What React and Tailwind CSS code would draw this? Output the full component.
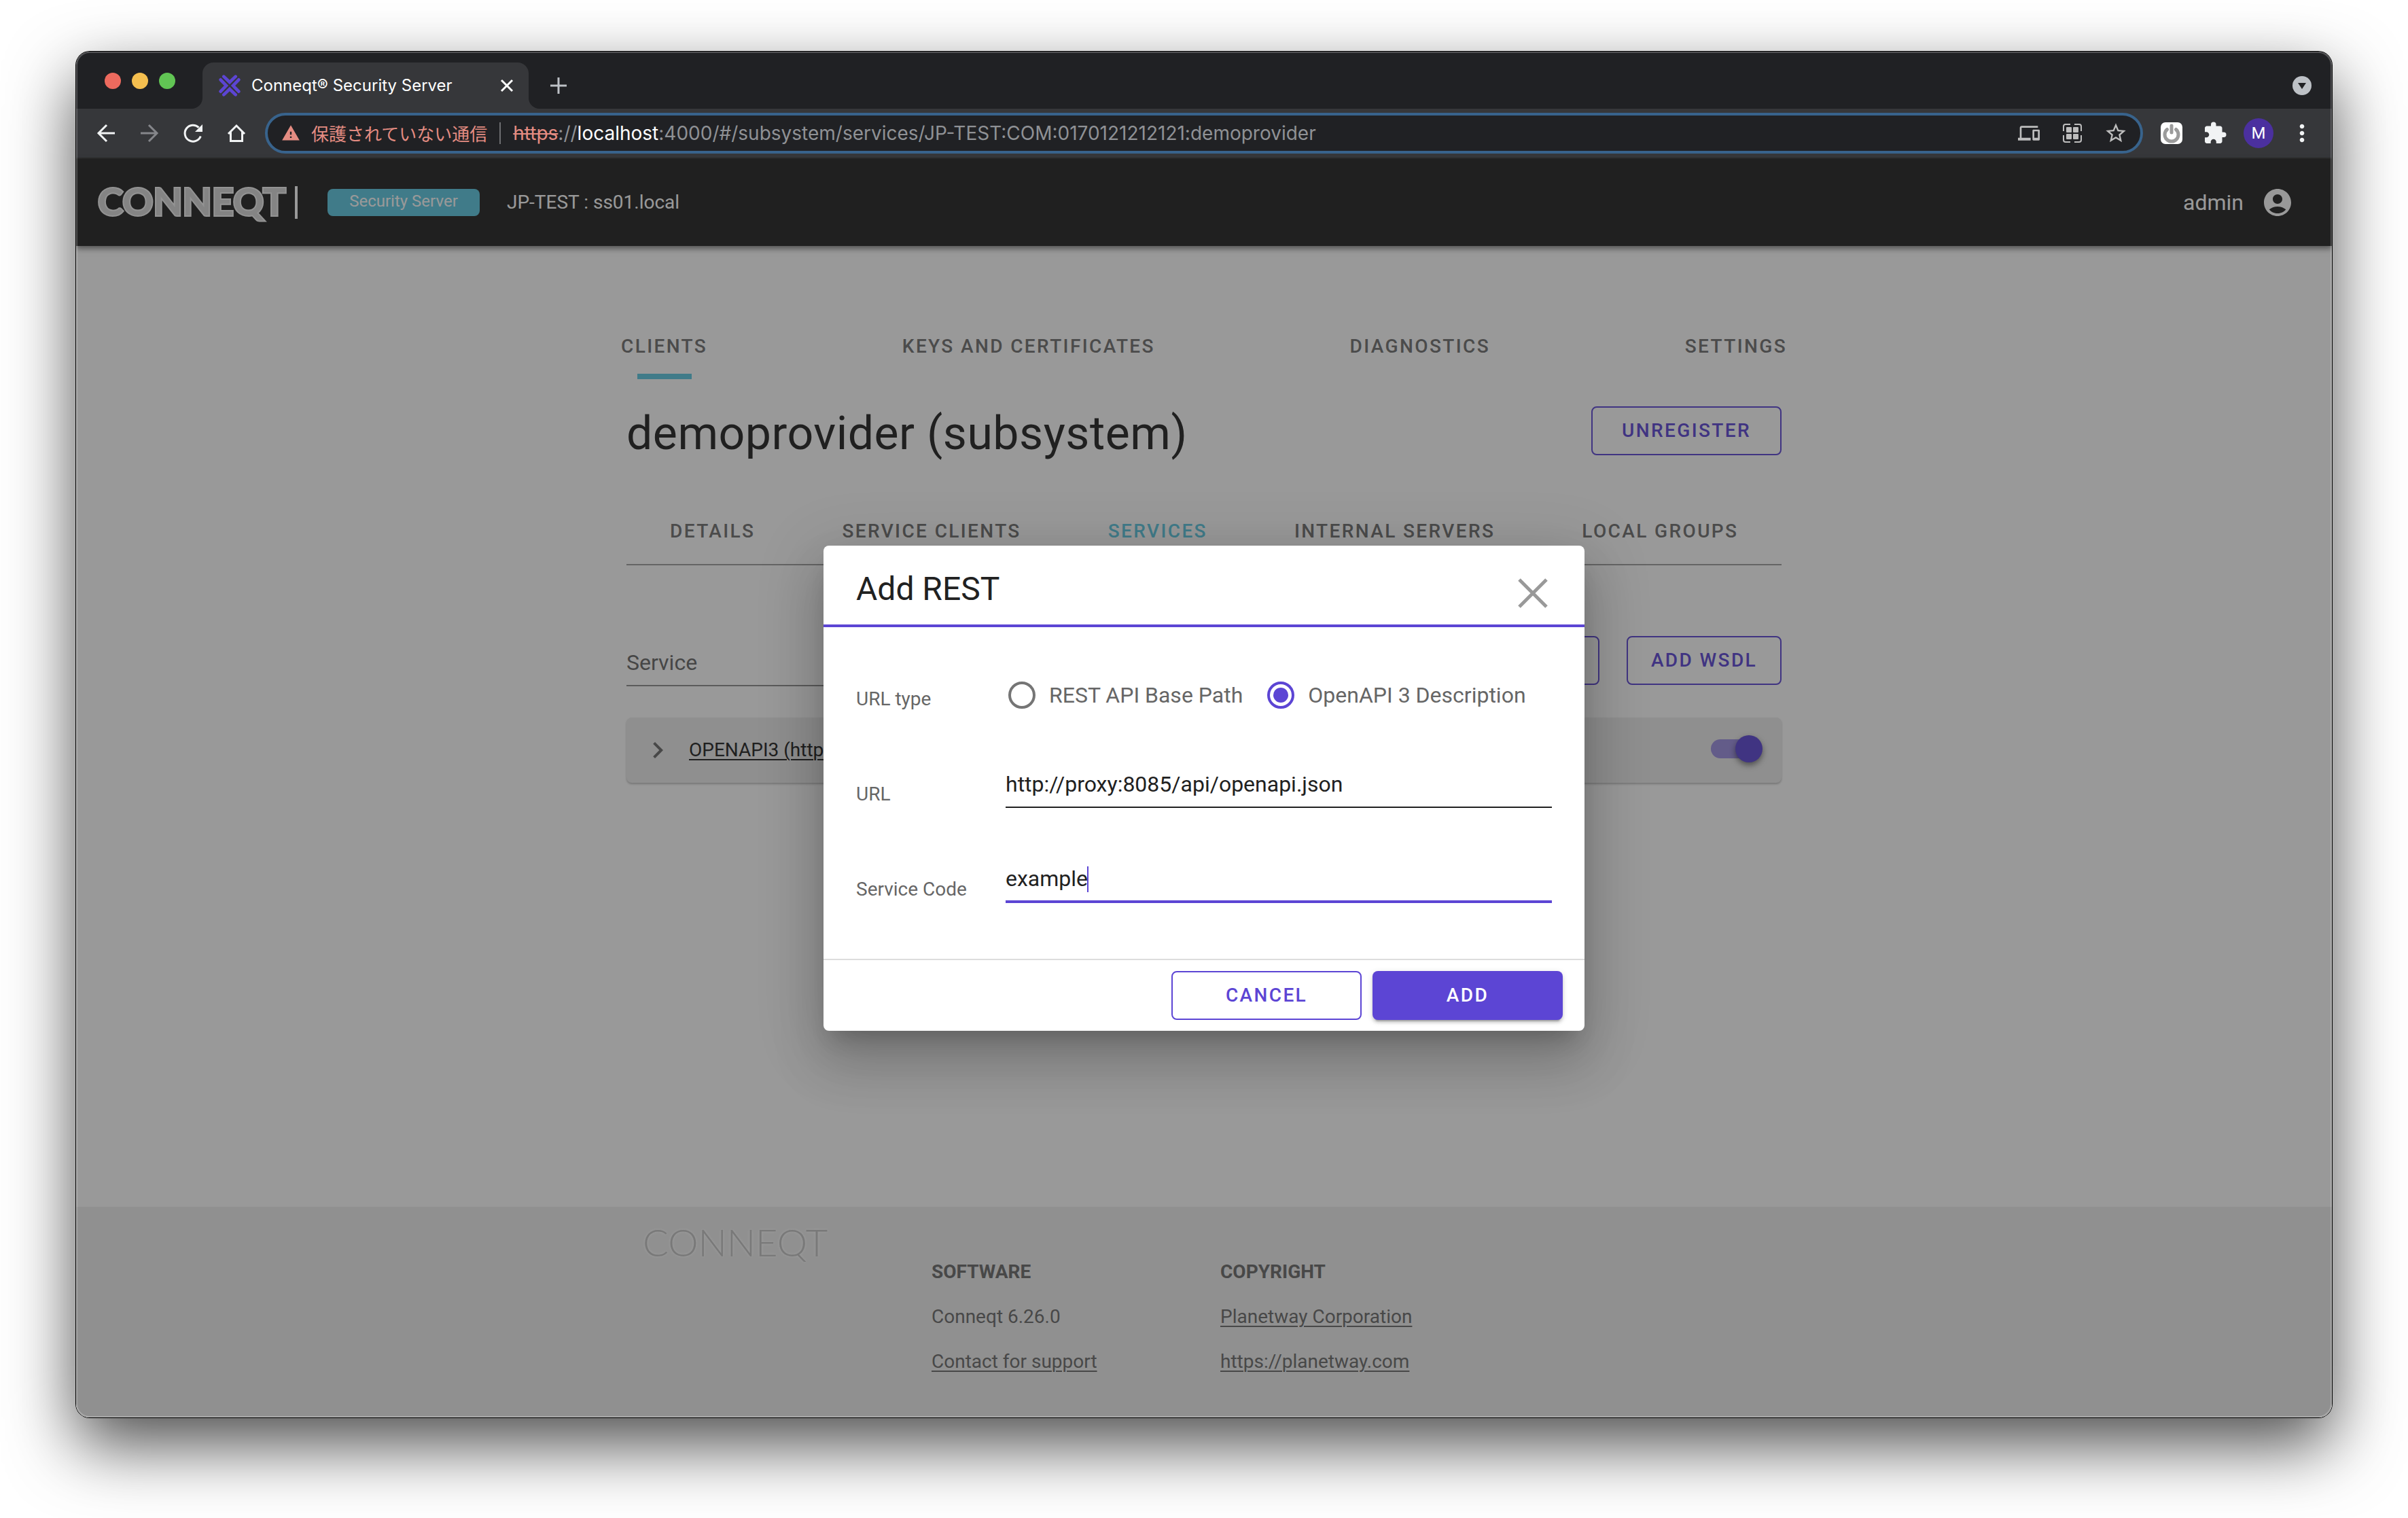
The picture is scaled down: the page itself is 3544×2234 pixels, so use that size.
import React, { useState } from "react";
import {
  MdAccountCircle,
  MdChevronRight,
  MdExtension,
  MdMoreVert,
  MdOutlineDevices,
  MdStarBorder,
  MdWarning,
} from "react-icons/md";

function Favicon() {
  return (
    <svg viewBox="0 0 96 96" className="size-8 shrink-0" fill="none" stroke="#5c45d4" strokeWidth="14" strokeLinecap="round" aria-hidden="true">
      <path d="M22 8 48 33 74 8" />
      <path d="M22 88 48 63 74 88" />
      <path d="M8 22 33 48 8 74" />
      <path d="M88 22 63 48 88 74" />
    </svg>
  );
}

function TabFlare({ className }) {
  return (
    <svg viewBox="0 0 16 16" className={className} aria-hidden="true">
      <path d="M16 0v16H0A16 16 0 0 0 16 0Z" fill="#36373a" />
    </svg>
  );
}

function ArrowIcon({ className }) {
  return (
    <svg viewBox="0 0 32 32" className={className} fill="none" stroke="currentColor" strokeWidth="3" aria-hidden="true">
      <path d="M29 16H5M17 4 5 16 17 28" strokeLinejoin="miter" />
    </svg>
  );
}

function ReloadIcon() {
  return (
    <svg viewBox="0 0 32 32" className="size-8" aria-hidden="true">
      <path d="M27.300 20.500A12 12 0 1 1 24.500 7.600" fill="none" stroke="currentColor" strokeWidth="3" />
      <path d="M30 3v11H19Z" fill="currentColor" />
    </svg>
  );
}

function HomeIcon() {
  return (
    <svg viewBox="0 0 32 32" className="size-8" fill="none" stroke="currentColor" strokeWidth="3" aria-hidden="true">
      <path d="M4 17 16 5l12 12M7.500 14v13.500h17V14" />
    </svg>
  );
}

function AppsFrameIcon() {
  return (
    <svg viewBox="0 0 32 32" className="size-8" aria-hidden="true">
      <path d="M13 3H6a3 3 0 0 0-3 3v7M19 3h7a3 3 0 0 1 3 3v7M3 19v7a3 3 0 0 0 3 3h7M29 19v7a3 3 0 0 1-3 3h-7" fill="none" stroke="currentColor" strokeWidth="2" />
      <g fill="currentColor">
        <rect x="7" y="7" width="8" height="8" rx="1" />
        <rect x="17" y="7" width="8" height="8" rx="1" />
        <rect x="7" y="17" width="8" height="8" rx="1" />
        <rect x="17" y="17" width="8" height="8" rx="1" />
      </g>
    </svg>
  );
}

function PowerIcon() {
  return (
    <svg viewBox="0 0 32 32" className="size-8" aria-hidden="true">
      <rect width="32" height="32" rx="7" fill="#fff" />
      <path d="M9.500 10.500A10 10 0 1 0 22.500 10.500" fill="none" stroke="#9b9b9b" strokeWidth="5" strokeLinecap="round" />
      <path d="M16 5v10" stroke="#9b9b9b" strokeWidth="5" strokeLinecap="round" />
    </svg>
  );
}

function TabSearchIcon() {
  return (
    <svg viewBox="0 0 28 28" className="size-7" aria-hidden="true">
      <circle cx="14" cy="14" r="14" fill="#bdc1c6" />
      <path d="M8 10h12l-6 9Z" fill="#202124" />
    </svg>
  );
}

function TabStrip() {
  return (
    <div className="flex h-[84px] items-stretch bg-[#202124] pl-[42px] pr-[30px]">
      <div className="flex items-center gap-4 pt-[2px]">
        <button type="button" aria-label="Close window" className="size-6 rounded-full bg-[#ed6a5e]" />
        <button type="button" aria-label="Minimize window" className="size-6 rounded-full bg-[#f5bf4f]" />
        <button type="button" aria-label="Zoom window" className="size-6 rounded-full bg-[#61c554]" />
      </div>
      <div className="relative ml-10 mt-4 flex w-[480px] items-center gap-4 rounded-t-2xl bg-[#36373a] pl-6 pr-5">
        <TabFlare className="absolute -left-4 bottom-0 size-4" />
        <TabFlare className="absolute -right-4 bottom-0 size-4 -scale-x-100" />
        <Favicon />
        <span className="flex-1 whitespace-nowrap text-[24px] leading-8 text-white font-['Inter',sans-serif]">Conneqt® Security Server</span>
        <button type="button" aria-label="Close tab" className="text-white">
          <svg viewBox="0 0 24 24" className="size-6" stroke="currentColor" strokeWidth="3" aria-hidden="true">
            <path d="M4 4 20 20M20 4 4 20" />
          </svg>
        </button>
      </div>
      <button type="button" aria-label="New tab" className="ml-8 mt-4 text-[#bdc1c6]">
        <svg viewBox="0 0 24 24" className="size-6" stroke="currentColor" strokeWidth="3" aria-hidden="true">
          <path d="M12 0v24M0 12h24" />
        </svg>
      </button>
      <button type="button" aria-label="Search tabs" className="ml-auto mt-4">
        <TabSearchIcon />
      </button>
    </div>
  );
}

function BrowserToolbar() {
  return (
    <div className="flex h-[74px] items-center border-b-2 border-[#2b2b2b] bg-[#36373a] px-7 text-[#f1f3f4]">
      <div className="mr-[26px] flex gap-8">
        <button type="button" aria-label="Back"><ArrowIcon className="size-8" /></button>
        <button type="button" aria-label="Forward" className="text-[#85868a]"><ArrowIcon className="size-8 -scale-x-100" /></button>
        <button type="button" aria-label="Reload"><ReloadIcon /></button>
        <button type="button" aria-label="Home"><HomeIcon /></button>
      </div>
      <div className="flex h-[60px] flex-1 items-center rounded-full border-4 border-[#38638c] bg-[#202124] px-5">
        <MdWarning className="size-7 text-[#e48c82]" />
        <span className="ml-4 whitespace-nowrap text-[26px] leading-8 text-[#e48c82] font-['Noto_Sans_CJK_JP',sans-serif]">保護されていない通信</span>
        <span className="mx-[18px] h-8 w-[2px] bg-[#6d6e71]" />
        <p className="flex-1 whitespace-nowrap text-[28px] leading-8 text-[#8f9195] font-['Inter',sans-serif]">
          <span className="text-[#e48c82] line-through">https</span>://<span className="text-white">localhost</span>:4000/#/subsystem/services/JP-TEST:COM:0170121212121:demoprovider
        </p>
        <div className="flex gap-8 text-[#bdbdbd]">
          <button type="button" aria-label="Send to your devices"><MdOutlineDevices className="size-8" /></button>
          <button type="button" aria-label="Apps"><AppsFrameIcon /></button>
          <button type="button" aria-label="Bookmark this page"><MdStarBorder className="size-8 scale-110" /></button>
        </div>
      </div>
      <div className="ml-[26px] flex items-center gap-6">
        <button type="button" aria-label="Power extension"><PowerIcon /></button>
        <button type="button" aria-label="Extensions" className="ml-[6px]"><MdExtension className="size-9" /></button>
        <button type="button" aria-label="Profile" className="flex size-11 items-center justify-center rounded-full bg-[#4b309f] text-[24px] text-white">M</button>
        <button type="button" aria-label="Browser menu" className="ml-[2px]"><MdMoreVert className="size-8 scale-125" /></button>
      </div>
    </div>
  );
}

function AppHeader() {
  return (
    <header className="relative flex h-32 items-center bg-[#212121] pl-8 pr-14 text-white shadow-[0_4px_8px_rgba(0,0,0,0.5)]">
      <span className="w-[278px] whitespace-nowrap pb-1 text-[56px] leading-none text-[#d8d8d8] [-webkit-text-stroke:4px_#f4f4f4] [paint-order:stroke_fill] font-['Lato',sans-serif] font-bold">CONNEQT</span>
      <span className="ml-3 h-12 w-1 bg-white" />
      <span className="ml-11 w-[224px] rounded-lg bg-[#5cc8e1] pb-[6px] pt-[2px] text-center text-[24px] leading-8">Security Server</span>
      <span className="ml-10 text-[28px] leading-10">JP-TEST : ss01.local</span>
      <span className="ml-auto mr-[26px] text-[32px] leading-10">admin</span>
      <button type="button" aria-label="Account"><MdAccountCircle className="size-12" /></button>
    </header>
  );
}

function OutlineButton({ className, children }) {
  return (
    <button type="button" className={`h-[72px] shrink-0 whitespace-nowrap rounded-lg border-2 border-[#5c45d4] text-[28px] leading-10 font-medium tracking-[0.085em] text-[#5c45d4] ${className}`}>
      {children}
    </button>
  );
}

const mainTabs = ["CLIENTS", "KEYS AND CERTIFICATES", "DIAGNOSTICS", "SETTINGS"];
const subTabs = ["DETAILS", "SERVICE CLIENTS", "SERVICES", "INTERNAL SERVERS", "LOCAL GROUPS"];

function ServicesPage() {
  return (
    <main className="pt-[100px] text-[#212121]">
      <nav className="mx-auto flex max-w-[1716px] justify-between">
        {mainTabs.map((tab, i) => (
          <a key={tab} href="#main" className="relative flex h-24 items-center whitespace-nowrap text-[28px] leading-10 font-medium tracking-[0.085em] text-[#707070]">
            {tab}
            {i === 0 && <span className="absolute bottom-0 left-1/2 h-2 w-20 -translate-x-1/2 bg-[#5cc8e1]" />}
          </a>
        ))}
      </nav>
      <div className="mx-auto max-w-[1700px]">
        <div className="mt-10 flex items-start justify-between">
          <h1 className="text-[68px] leading-[80px] tracking-[0.0074em]">demoprovider (subsystem)</h1>
          <OutlineButton className="w-[280px]">UNREGISTER</OutlineButton>
        </div>
        <nav className="mt-14 flex border-b-2 border-[#a0a0a0]">
          {subTabs.map((tab) => (
            <a key={tab} href="#sub" className={`flex h-24 items-center whitespace-nowrap px-16 text-[28px] leading-10 font-medium tracking-[0.085em] ${tab === "SERVICES" ? "text-[#5cc8e1]" : "text-[#707070]"}`}>
              {tab}
            </a>
          ))}
        </nav>
        <div className="mt-[104px] flex items-start">
          <input type="text" aria-label="Service" placeholder="Service" className="mt-[6px] h-[68px] w-[600px] border-b-2 border-[#8c8c8c] text-[32px] placeholder:text-[#666666]" />
          <OutlineButton className="ml-auto w-[220px]">ADD REST</OutlineButton>
          <OutlineButton className="ml-10 w-[228px]">ADD WSDL</OutlineButton>
        </div>
        <section className="mt-[46px] flex h-24 items-center rounded-lg bg-[#ececec] pl-[22px] pr-8 shadow-[0_2px_3px_rgba(0,0,0,0.25)]">
          <button type="button" aria-label="Expand" className="text-[#6a6a6a]"><MdChevronRight className="size-12" /></button>
          <a href="#openapi3" className="ml-[22px] text-[28px] leading-10 underline decoration-2 underline-offset-4">OPENAPI3 (http://proxy:8085/api/openapi.json)</a>
          <input
            type="checkbox"
            role="switch"
            aria-label="Service enabled"
            defaultChecked
            className="relative mb-1 ml-auto h-7 w-[72px] appearance-none rounded-full bg-[#9c8ee2] before:absolute before:-top-[6px] before:left-9 before:size-10 before:rounded-full before:bg-[#5c45d4] before:shadow-[0_4px_8px_rgba(0,0,0,0.5)]"
          />
        </section>
      </div>
    </main>
  );
}

function AppFooter() {
  return (
    <footer className="mt-auto bg-[#eeeeee] text-[28px] leading-[66px] text-[#6a6a6a]">
      <div className="mx-auto grid max-w-[1700px] grid-cols-4">
        <div className="px-6 pt-5">
          <span className="block whitespace-nowrap text-[56px] leading-[64px] font-light text-[#c4c4c4] [text-shadow:0_0_4px_#ffffff,0_0_4px_#ffffff] font-['Lato',sans-serif]">CONNEQT</span>
        </div>
        <div className="px-6 pb-[49px] pt-[63px]">
          <h2 className="font-bold">SOFTWARE</h2>
          <p>Conneqt 6.26.0</p>
          <p><a href="#support" className="underline decoration-2 underline-offset-4">Contact for support</a></p>
        </div>
        <div className="px-6 pb-[49px] pt-[63px]">
          <h2 className="font-bold">COPYRIGHT</h2>
          <p><a href="#corporation" className="underline decoration-2 underline-offset-4">Planetway Corporation</a></p>
          <p><a href="https://planetway.com" className="underline decoration-2 underline-offset-4">https://planetway.com</a></p>
        </div>
      </div>
    </footer>
  );
}

function RadioOption({ label, checked, onChange }) {
  return (
    <label className="flex items-center gap-5 whitespace-nowrap text-[32px] leading-10 text-[#666666]">
      <input
        type="radio"
        name="url-type"
        checked={checked}
        onChange={onChange}
        className="grid size-10 appearance-none place-items-center rounded-full border-4 border-[#757575] before:size-[22px] before:rounded-full checked:border-[#5c45d4] checked:before:bg-[#5c45d4]"
      />
      {label}
    </label>
  );
}

function AddRestDialog() {
  const [type, setType] = useState("openapi");
  const [url, setUrl] = useState("http://proxy:8085/api/openapi.json");
  const [code, setCode] = useState("example");
  return (
    <div className="absolute inset-0 flex items-center justify-center bg-[#212121]/46">
      <form
        role="dialog"
        aria-labelledby="dialog-title"
        onSubmit={(e) => e.preventDefault()}
        className="w-full max-w-[1120px] rounded-lg bg-white shadow-[0_22px_30px_-14px_rgba(0,0,0,0.2),0_48px_76px_6px_rgba(0,0,0,0.14),0_18px_92px_16px_rgba(0,0,0,0.12)]"
      >
        <div className="flex items-end justify-between border-b-4 border-[#5c45d4] pb-5 pl-12 pr-[54px] pt-8">
          <h2 id="dialog-title" className="text-[48px] leading-[64px] text-[#212121]">Add REST</h2>
          <button type="button" aria-label="Close dialog" className="py-1 text-[#999999]">
            <svg viewBox="0 0 44 44" className="size-11" stroke="currentColor" strokeWidth="5" aria-hidden="true">
              <path d="M2 2 42 42M42 2 2 42" />
            </svg>
          </button>
        </div>
        <div className="px-12 pb-8 pt-9 text-[28px] text-[#666666]">
          <fieldset className="flex h-[140px] items-center">
            <span className="w-[220px] shrink-0 leading-10">URL type</span>
            <div className="mb-3 ml-1 flex gap-9">
              <RadioOption label="REST API Base Path" checked={type === "rest"} onChange={() => setType("rest")} />
              <RadioOption label="OpenAPI 3 Description" checked={type === "openapi"} onChange={() => setType("openapi")} />
            </div>
          </fieldset>
          <div className="flex h-[140px] items-center">
            <label htmlFor="url" className="w-[220px] shrink-0 leading-10">URL</label>
            <input id="url" type="text" value={url} onChange={(e) => setUrl(e.target.value)} className="mb-7 h-[68px] min-w-0 flex-1 border-b-2 border-[#212121] text-[32px] text-[#212121] outline-none" />
          </div>
          <div className="flex h-[140px] items-center">
            <label htmlFor="code" className="w-[220px] shrink-0 leading-10">Service Code</label>
            <div className="relative mb-7 flex-1">
              <input id="code" type="text" value={code} onChange={(e) => setCode(e.target.value)} className="block h-[68px] w-full border-b-4 border-[#5c45d4] text-[32px] text-[#212121] outline-none" />
              <span className="absolute left-[120px] top-[14px] h-[38px] w-[2px] bg-[#5c45d4]" />
            </div>
          </div>
        </div>
        <div className="flex justify-end gap-4 border-t-2 border-[#dddddd] px-8 py-4">
          <OutlineButton className="w-[280px]">CANCEL</OutlineButton>
          <button type="submit" className="h-[72px] w-[280px] rounded-lg bg-[#5c45d4] text-[28px] leading-10 font-medium tracking-[0.085em] text-white shadow-[0_6px_2px_-4px_rgba(0,0,0,0.2),0_4px_4px_rgba(0,0,0,0.14),0_2px_10px_rgba(0,0,0,0.12)]">ADD</button>
        </div>
      </form>
    </div>
  );
}

export default function App() {
  return (
    <div className="flex min-h-screen flex-col bg-white px-28 pb-[148px] pt-[76px] font-['Roboto',sans-serif]">
      <div className="relative flex flex-1 flex-col overflow-hidden rounded-[20px] shadow-[0_0_0_1px_#000000,0_40px_100px_rgba(0,0,0,0.7)]">
        <TabStrip />
        <BrowserToolbar />
        <div className="relative flex flex-1 flex-col bg-white">
          <AppHeader />
          <ServicesPage />
          <AppFooter />
          <AddRestDialog />
        </div>
        <div className="pointer-events-none absolute inset-0 rounded-[20px] shadow-[inset_0_0_0_2px_rgba(255,255,255,0.22)]" />
      </div>
    </div>
  );
}
